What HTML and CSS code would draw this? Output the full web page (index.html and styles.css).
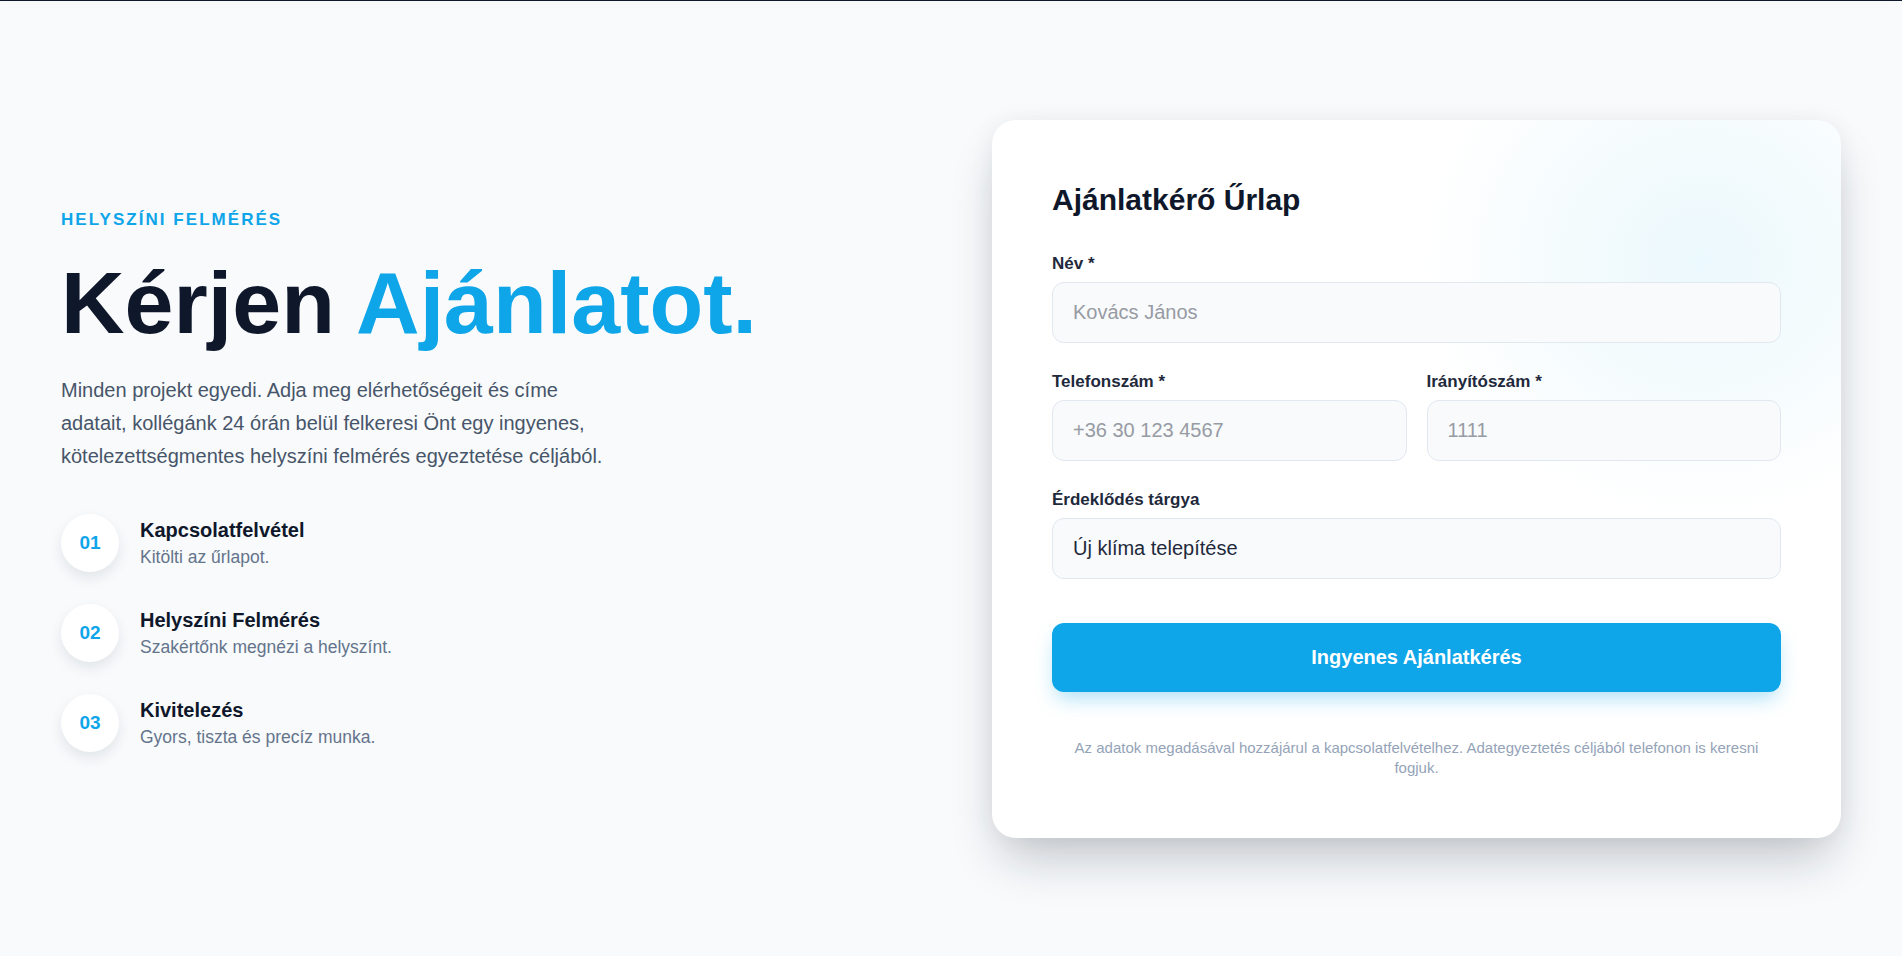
FILE: index.html
```html
<!DOCTYPE html>
<html lang="hu">
<head>
  <meta charset="UTF-8" />
  <meta name="viewport" content="width=device-width, initial-scale=1.0"/>
  <title>Ajánlatkérés</title>
  <link rel="stylesheet" href="styles.css">
</head>
<body>

  <div class="topline"></div>

  <section class="quote">
    <div class="intro">
      <p class="eyebrow">Helyszíni felmérés</p>
      <h1 class="headline">Kérjen <span class="accent">Ajánlatot.</span></h1>
      <p class="lead">Minden projekt egyedi. Adja meg elérhetőségeit és címe adatait, kollégánk 24 órán belül felkeresi Önt egy ingyenes, kötelezettségmentes helyszíni felmérés egyeztetése céljából.</p>

      <ul class="steps">
        <li class="step">
          <div class="step-num">01</div>
          <div>
            <h3 class="step-title">Kapcsolatfelvétel</h3>
            <p class="step-text">Kitölti az űrlapot.</p>
          </div>
        </li>
        <li class="step">
          <div class="step-num">02</div>
          <div>
            <h3 class="step-title">Helyszíni Felmérés</h3>
            <p class="step-text">Szakértőnk megnézi a helyszínt.</p>
          </div>
        </li>
        <li class="step">
          <div class="step-num">03</div>
          <div>
            <h3 class="step-title">Kivitelezés</h3>
            <p class="step-text">Gyors, tiszta és precíz munka.</p>
          </div>
        </li>
      </ul>
    </div>

    <div class="card">
      <h2 class="card-title">Ajánlatkérő Űrlap</h2>

      <form class="form" onsubmit="return false;">
        <div class="field">
          <label for="name">Név *</label>
          <input type="text" id="name" placeholder="Kovács János">
        </div>

        <div class="row">
          <div class="field">
            <label for="phone">Telefonszám *</label>
            <input type="tel" id="phone" placeholder="+36 30 123 4567">
          </div>
          <div class="field">
            <label for="zip">Irányítószám *</label>
            <input type="text" id="zip" placeholder="1111">
          </div>
        </div>

        <div class="field">
          <label for="topic">Érdeklődés tárgya</label>
          <select id="topic">
            <option>Új klíma telepítése</option>
            <option>Klíma karbantartás</option>
            <option>Hőszivattyú</option>
          </select>
        </div>

        <button type="submit" class="submit">Ingyenes Ajánlatkérés</button>

        <p class="disclaimer">Az adatok megadásával hozzájárul a kapcsolatfelvételhez. Adategyeztetés céljából telefonon is keresni fogjuk.</p>
      </form>
    </div>
  </section>

</body>
</html>
```

FILE: styles.css
```css
body {
  font-family: "Liberation Sans", Arial, sans-serif;
  background-color: #f8fafc;
  color: #0f172a;
  margin: 0;
}

.topline {
  height: 1px;
  background-color: #0f172a;
  box-shadow: 0 2px 14px rgba(15, 23, 42, 0.08);
}

.quote {
  display: grid;
  grid-template-columns: 1fr 1fr;
  column-gap: 82px;
  align-items: center;
  min-height: calc(100vh - 1px);
  padding: 0 61px;
  box-sizing: border-box;
}

/* left column */

.eyebrow {
  margin: 2px 0 0;
  font-size: 17px;
  line-height: 24px;
  font-weight: bold;
  letter-spacing: 0.12em;
  text-transform: uppercase;
  color: #0ea5e9;
}

.headline {
  margin: 27px 0 0;
  font-size: 88px;
  line-height: 88px;
  font-weight: 900;
  color: #0f172a;
}

.accent {
  color: #0ea5e9;
}

.lead {
  margin: 27px 0 0;
  max-width: 560px;
  font-size: 20px;
  line-height: 33px;
  color: #475569;
}

.steps {
  list-style: none;
  margin: 41px 0 0;
  padding: 0;
  display: flex;
  flex-direction: column;
  gap: 32px;
}

.step {
  display: flex;
  align-items: center;
  gap: 21px;
}

.step-num {
  width: 58px;
  height: 58px;
  flex-shrink: 0;
  border-radius: 50%;
  background: #fff;
  box-shadow: 0 6px 14px rgba(15, 23, 42, 0.09);
  display: flex;
  align-items: center;
  justify-content: center;
  font-size: 19px;
  font-weight: bold;
  color: #0ea5e9;
}

.step-title {
  margin: 0 0 1px;
  font-size: 20px;
  line-height: 27px;
  color: #0f172a;
}

.step-text {
  margin: 0;
  font-size: 17.5px;
  line-height: 24px;
  color: #64748b;
}

/* form card */

.card {
  position: relative;
  overflow: hidden;
  background: #fff;
  border-radius: 24px;
  padding: 62px 60px 60px;
  box-shadow: 0 28px 50px -10px rgba(15, 23, 42, 0.24), 0 0 24px rgba(15, 23, 42, 0.05);
}

/* soft tint in the top right corner */
.card::before {
  content: "";
  position: absolute;
  top: -120px;
  right: -140px;
  width: 560px;
  height: 520px;
  background: radial-gradient(closest-side, rgba(232, 247, 252, 0.85), rgba(232, 247, 252, 0.45) 50%, rgba(255, 255, 255, 0));
}

.card-title {
  position: relative;
  margin: 0 0 35px;
  font-size: 30px;
  line-height: 36px;
  font-weight: bold;
  color: #0f172a;
}

.form {
  position: relative;
  display: flex;
  flex-direction: column;
  gap: 28px;
}

.row {
  display: grid;
  grid-template-columns: 1fr 1fr;
  gap: 20px;
}

.field label {
  display: block;
  margin-bottom: 8px;
  font-size: 17px;
  line-height: 21px;
  font-weight: bold;
  color: #1e293b;
}

.field input,
.field select {
  display: block;
  width: 100%;
  box-sizing: border-box;
  height: 61px;
  padding: 0 20px;
  font-family: inherit;
  font-size: 20px;
  color: #1e293b;
  background: #f8fafc;
  border: 1px solid #e2e8f0;
  border-radius: 12px;
  outline: none;
  appearance: none;
}

.field input::placeholder {
  color: #979ba3;
}

.submit {
  margin-top: 16px;
  height: 69px;
  border: none;
  border-radius: 12px;
  background-color: #0ea5e9;
  color: #fff;
  font-family: inherit;
  font-size: 20px;
  font-weight: bold;
  cursor: pointer;
  box-shadow: 0 10px 20px -4px rgba(14, 165, 233, 0.35);
}

.disclaimer {
  margin: 18px 0 0;
  text-align: center;
  font-size: 15px;
  line-height: 20px;
  color: #94a3b8;
}
```
